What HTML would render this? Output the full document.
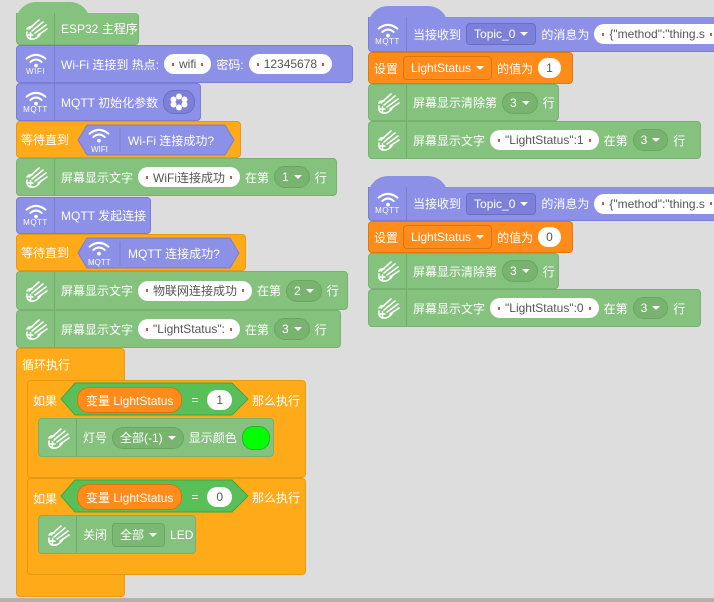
<!DOCTYPE html><html><head><meta charset="utf-8"><style>
body{margin:0;width:714px;height:602px;background:#dddddd;position:relative;overflow:hidden;font-family:"Liberation Sans","Noto Sans CJK SC",sans-serif;font-size:12px;color:#fff}
.b{position:absolute;display:flex;align-items:center;box-sizing:border-box;border-radius:4px;white-space:nowrap}
.g{background:#85c27e;border:1px solid #77b270}
.p{background:#8c90e6;border:1px solid #7a7ed2}
.o{background:#ffab19;border:1px solid #e69a10}
.s{background:#ff8c1a;border:1px solid #e07810}
.ic{width:37px;height:100%;display:flex;flex-direction:column;align-items:center;justify-content:center;border-right:1px solid rgba(0,0,0,.12);margin-right:6px;flex:none}
.ic small{font-size:8px;line-height:8px;letter-spacing:.5px}
.t{margin-right:5px}
.w{background:#fff;color:#555;border-radius:11px;height:20px;display:inline-flex;align-items:center;padding:0 8px;margin-right:5px;font-size:12px}
.w:before{content:"";width:2px;height:3px;background:#c8584a;margin-right:5px}
.w:after{content:"";width:2px;height:3px;background:#c8584a;margin-left:5px}
.n{background:#fff;color:#555;border-radius:11px;height:20px;display:inline-flex;align-items:center;padding:0 8px;margin-right:5px}
.dd{border-radius:11px;height:20px;display:inline-flex;align-items:center;padding:0 7px;margin-right:5px;background:#78b470;border:1px solid #6aa563}
.dd:after{content:"";border:4px solid transparent;border-top:4px solid #fff;border-bottom:0;margin-left:5px}
.dp{border-radius:4px;height:20px;display:inline-flex;align-items:center;padding:0 7px;margin-right:5px;background:#7c80d8;border:1px solid #6a6ec4}
.dp:after{content:"";border:4px solid transparent;border-top:4px solid #fff;border-bottom:0;margin-left:5px}
.ds{border-radius:4px;height:22px;display:inline-flex;align-items:center;padding:0 7px;margin-right:5px;background:#ff8c1a;border:1px solid #d9740f}
.ds:after{content:"";border:4px solid transparent;border-top:4px solid #fff;border-bottom:0;margin-left:5px}
.dg{border-radius:4px;height:22px;display:inline-flex;align-items:center;padding:0 7px;margin-right:5px;background:#7ab873;border:1px solid #6aa563}
.dg:after{content:"";border:4px solid transparent;border-top:4px solid #fff;border-bottom:0;margin-left:5px}
.hat{position:absolute;border-radius:40px 40px 0 0}
.var{background:#ff8c1a;border:1px solid #d9740f;border-radius:12px;height:24px;display:inline-flex;align-items:center;padding:0 8px}
</style></head><body>
<svg width="0" height="0" style="position:absolute"><defs>
<symbol id="wf" viewBox="0 0 24 16"><path d="M2 6 Q12 -2 22 6" stroke="#fff" stroke-width="2.2" fill="none" stroke-linecap="round"/><path d="M6 9.5 Q12 4.5 18 9.5" stroke="#fff" stroke-width="2.2" fill="none" stroke-linecap="round"/><circle cx="12" cy="13.5" r="2" fill="#fff"/></symbol>
<symbol id="hd" viewBox="0 0 26 26"><g stroke="#fff" stroke-width="1.6" fill="none" stroke-linecap="round"><path d="M4 16 Q3 24 11 23 Q15 22 18 17"/><path d="M6 13 L16 4"/><path d="M9 15 L20 6"/><path d="M12 17 L23 9"/><path d="M15 19 L24 13"/><path d="M5 19h5M7.5 16.5v5"/><path d="M4 13 Q6 10 9 11"/></g></symbol>
</defs></svg>

<!-- LEFT -->
<div class="hat" style="left:16px;top:2px;width:74px;height:20px;background:#85c27e"></div>
<div class="b g" style="left:16px;top:13px;width:123px;height:32px;border-top:0;border-radius:0 4px 4px 4px"><div class="ic"><svg width="26" height="26"><use href="#hd"/></svg></div>ESP32 主程序</div>
<div class="b p" style="left:16px;top:45px;width:337px;height:38px"><div class="ic"><svg width="24" height="15"><use href="#wf"/></svg><small>WIFI</small></div><span class="t">Wi-Fi 连接到 热点:</span><span class="w">wifi</span><span class="t">密码:</span><span class="w">12345678</span></div>
<div class="b p" style="left:16px;top:83px;width:185px;height:38px"><div class="ic"><svg width="24" height="15"><use href="#wf"/></svg><small>MQTT</small></div><span class="t">MQTT 初始化参数</span><span style="width:30px;height:22px;border-radius:11px;background:#7c80d8;border:1px solid #6a6ec4;display:inline-flex;align-items:center;justify-content:center"><svg width="18" height="18" viewBox="0 0 18 18"><g fill="#fff"><circle cx="9" cy="3.5" r="3"/><circle cx="9" cy="14.5" r="3"/><circle cx="3.5" cy="6.5" r="3"/><circle cx="14.5" cy="6.5" r="3"/><circle cx="3.5" cy="11.5" r="3"/><circle cx="14.5" cy="11.5" r="3"/></g><circle cx="9" cy="9" r="2.5" fill="#7c80d8"/></svg></span></div>
<div class="b o" style="left:16px;top:121px;width:225px;height:37px;padding-left:4px">等待直到
<svg style="margin-left:6px" width="160" height="32"><path d="M12 1H150L159 16L150 31H12L3 16Z" fill="#8c90e6" stroke="#7a7ed2"/><line x1="45" y1="4" x2="45" y2="28" stroke="rgba(0,0,0,.12)"/><use href="#wf" x="12" y="4" width="24" height="15"/><text x="16" y="28" font-size="8" fill="#fff">WIFI</text><text x="53" y="21" font-size="12" fill="#fff" font-family="Liberation Sans,Noto Sans CJK SC,sans-serif">Wi-Fi 连接成功?</text></svg></div>
<div class="b g" style="left:16px;top:158px;width:321px;height:38px"><div class="ic"><svg width="26" height="26"><use href="#hd"/></svg></div><span class="t">屏幕显示文字</span><span class="w">WiFi连接成功</span><span class="t">在第</span><span class="dd">1</span><span>行</span></div>
<div class="b p" style="left:16px;top:197px;width:135px;height:37px"><div class="ic"><svg width="24" height="15"><use href="#wf"/></svg><small>MQTT</small></div>MQTT 发起连接</div>
<div class="b o" style="left:16px;top:234px;width:230px;height:37px;padding-left:4px">等待直到
<svg style="margin-left:6px" width="165" height="32"><path d="M12 1H155L164 16L155 31H12L3 16Z" fill="#8c90e6" stroke="#7a7ed2"/><line x1="45" y1="4" x2="45" y2="28" stroke="rgba(0,0,0,.12)"/><use href="#wf" x="12" y="4" width="24" height="15"/><text x="13" y="28" font-size="8" fill="#fff">MQTT</text><text x="53" y="21" font-size="12" fill="#fff" font-family="Liberation Sans,Noto Sans CJK SC,sans-serif">MQTT 连接成功?</text></svg></div>
<div class="b g" style="left:16px;top:271px;width:332px;height:39px"><div class="ic"><svg width="26" height="26"><use href="#hd"/></svg></div><span class="t">屏幕显示文字</span><span class="w">物联网连接成功</span><span class="t">在第</span><span class="dd">2</span><span>行</span></div>
<div class="b g" style="left:16px;top:310px;width:325px;height:38px"><div class="ic"><svg width="26" height="26"><use href="#hd"/></svg></div><span class="t">屏幕显示文字</span><span class="w">"LightStatus":</span><span class="t">在第</span><span class="dd">3</span><span>行</span></div>
<!-- loop -->
<div class="b o" style="left:16px;top:348px;width:109px;height:249px;align-items:flex-start;padding:7px 5px">循环执行</div>
<div class="b o" style="left:27px;top:380px;width:279px;height:98px;align-items:flex-start;padding:11px 5px">如果</div>
<div class="b o" style="left:27px;top:478px;width:279px;height:97px;align-items:flex-start;padding:11px 5px">如果</div>
<svg style="position:absolute;left:60px;top:382px" width="192" height="36"><path d="M15 1H172L188 17L172 33H15L1 17Z" fill="#59c059" stroke="#3fa63f"/></svg>
<div class="b" style="left:77px;top:387px"><span class="var">变量 LightStatus</span><span style="margin:0 9px">=</span><span class="n" style="border-radius:12px;padding:0 9px">1</span></div>
<div class="b" style="left:252px;top:390px;height:20px">那么执行</div>
<svg style="position:absolute;left:60px;top:479px" width="192" height="36"><path d="M15 1H172L188 17L172 33H15L1 17Z" fill="#59c059" stroke="#3fa63f"/></svg>
<div class="b" style="left:77px;top:484px"><span class="var">变量 LightStatus</span><span style="margin:0 9px">=</span><span class="n" style="border-radius:12px;padding:0 9px">0</span></div>
<div class="b" style="left:252px;top:487px;height:20px">那么执行</div>
<div class="b g" style="left:38px;top:418px;width:236px;height:39px"><div class="ic"><svg width="26" height="26"><use href="#hd"/></svg></div><span class="t">灯号</span><span class="dd">全部(-1)</span><span class="t">显示颜色</span><span style="width:26px;height:22px;border-radius:11px;background:#00ff00;border:1px solid #3fa63f"></span></div>
<div class="b g" style="left:38px;top:515px;width:158px;height:39px"><div class="ic"><svg width="26" height="26"><use href="#hd"/></svg></div><span class="t">关闭</span><span class="dg">全部</span><span>LED</span></div>
<div style="position:absolute;left:0;top:598px;width:714px;height:4px;background:#b5b0a8"></div>

<!-- RIGHT group 1 -->
<div class="hat" style="left:368px;top:6px;width:80px;height:20px;background:#8c90e6"></div>
<div class="b p" style="left:368px;top:17px;width:350px;height:35px;border-top:0;border-radius:0 0 4px 4px"><div class="ic"><svg width="24" height="15"><use href="#wf"/></svg><small>MQTT</small></div><span class="t">当接收到</span><span class="dp">Topic_0</span><span class="t">的消息为</span><span class="w" style="padding-right:40px">{"method":"thing.s</span></div>
<div class="b s" style="left:368px;top:52px;width:205px;height:32px;padding-left:5px"><span class="t">设置</span><span class="ds">LightStatus</span><span class="t">的值为</span><span class="n" style="border-radius:12px">1</span></div>
<div class="b g" style="left:368px;top:84px;width:191px;height:37px"><div class="ic"><svg width="26" height="26"><use href="#hd"/></svg></div><span class="t">屏幕显示清除第</span><span class="dd">3</span><span>行</span></div>
<div class="b g" style="left:368px;top:121px;width:333px;height:38px"><div class="ic"><svg width="26" height="26"><use href="#hd"/></svg></div><span class="t">屏幕显示文字</span><span class="w">"LightStatus":1</span><span class="t">在第</span><span class="dd">3</span><span>行</span></div>
<!-- RIGHT group 2 -->
<div class="hat" style="left:368px;top:176px;width:80px;height:20px;background:#8c90e6"></div>
<div class="b p" style="left:368px;top:187px;width:350px;height:34px;border-top:0;border-radius:0 0 4px 4px"><div class="ic"><svg width="24" height="15"><use href="#wf"/></svg><small>MQTT</small></div><span class="t">当接收到</span><span class="dp">Topic_0</span><span class="t">的消息为</span><span class="w" style="padding-right:40px">{"method":"thing.s</span></div>
<div class="b s" style="left:368px;top:221px;width:205px;height:32px;padding-left:5px"><span class="t">设置</span><span class="ds">LightStatus</span><span class="t">的值为</span><span class="n" style="border-radius:12px">0</span></div>
<div class="b g" style="left:368px;top:253px;width:191px;height:36px"><div class="ic"><svg width="26" height="26"><use href="#hd"/></svg></div><span class="t">屏幕显示清除第</span><span class="dd">3</span><span>行</span></div>
<div class="b g" style="left:368px;top:289px;width:333px;height:38px"><div class="ic"><svg width="26" height="26"><use href="#hd"/></svg></div><span class="t">屏幕显示文字</span><span class="w">"LightStatus":0</span><span class="t">在第</span><span class="dd">3</span><span>行</span></div>
</body></html>
